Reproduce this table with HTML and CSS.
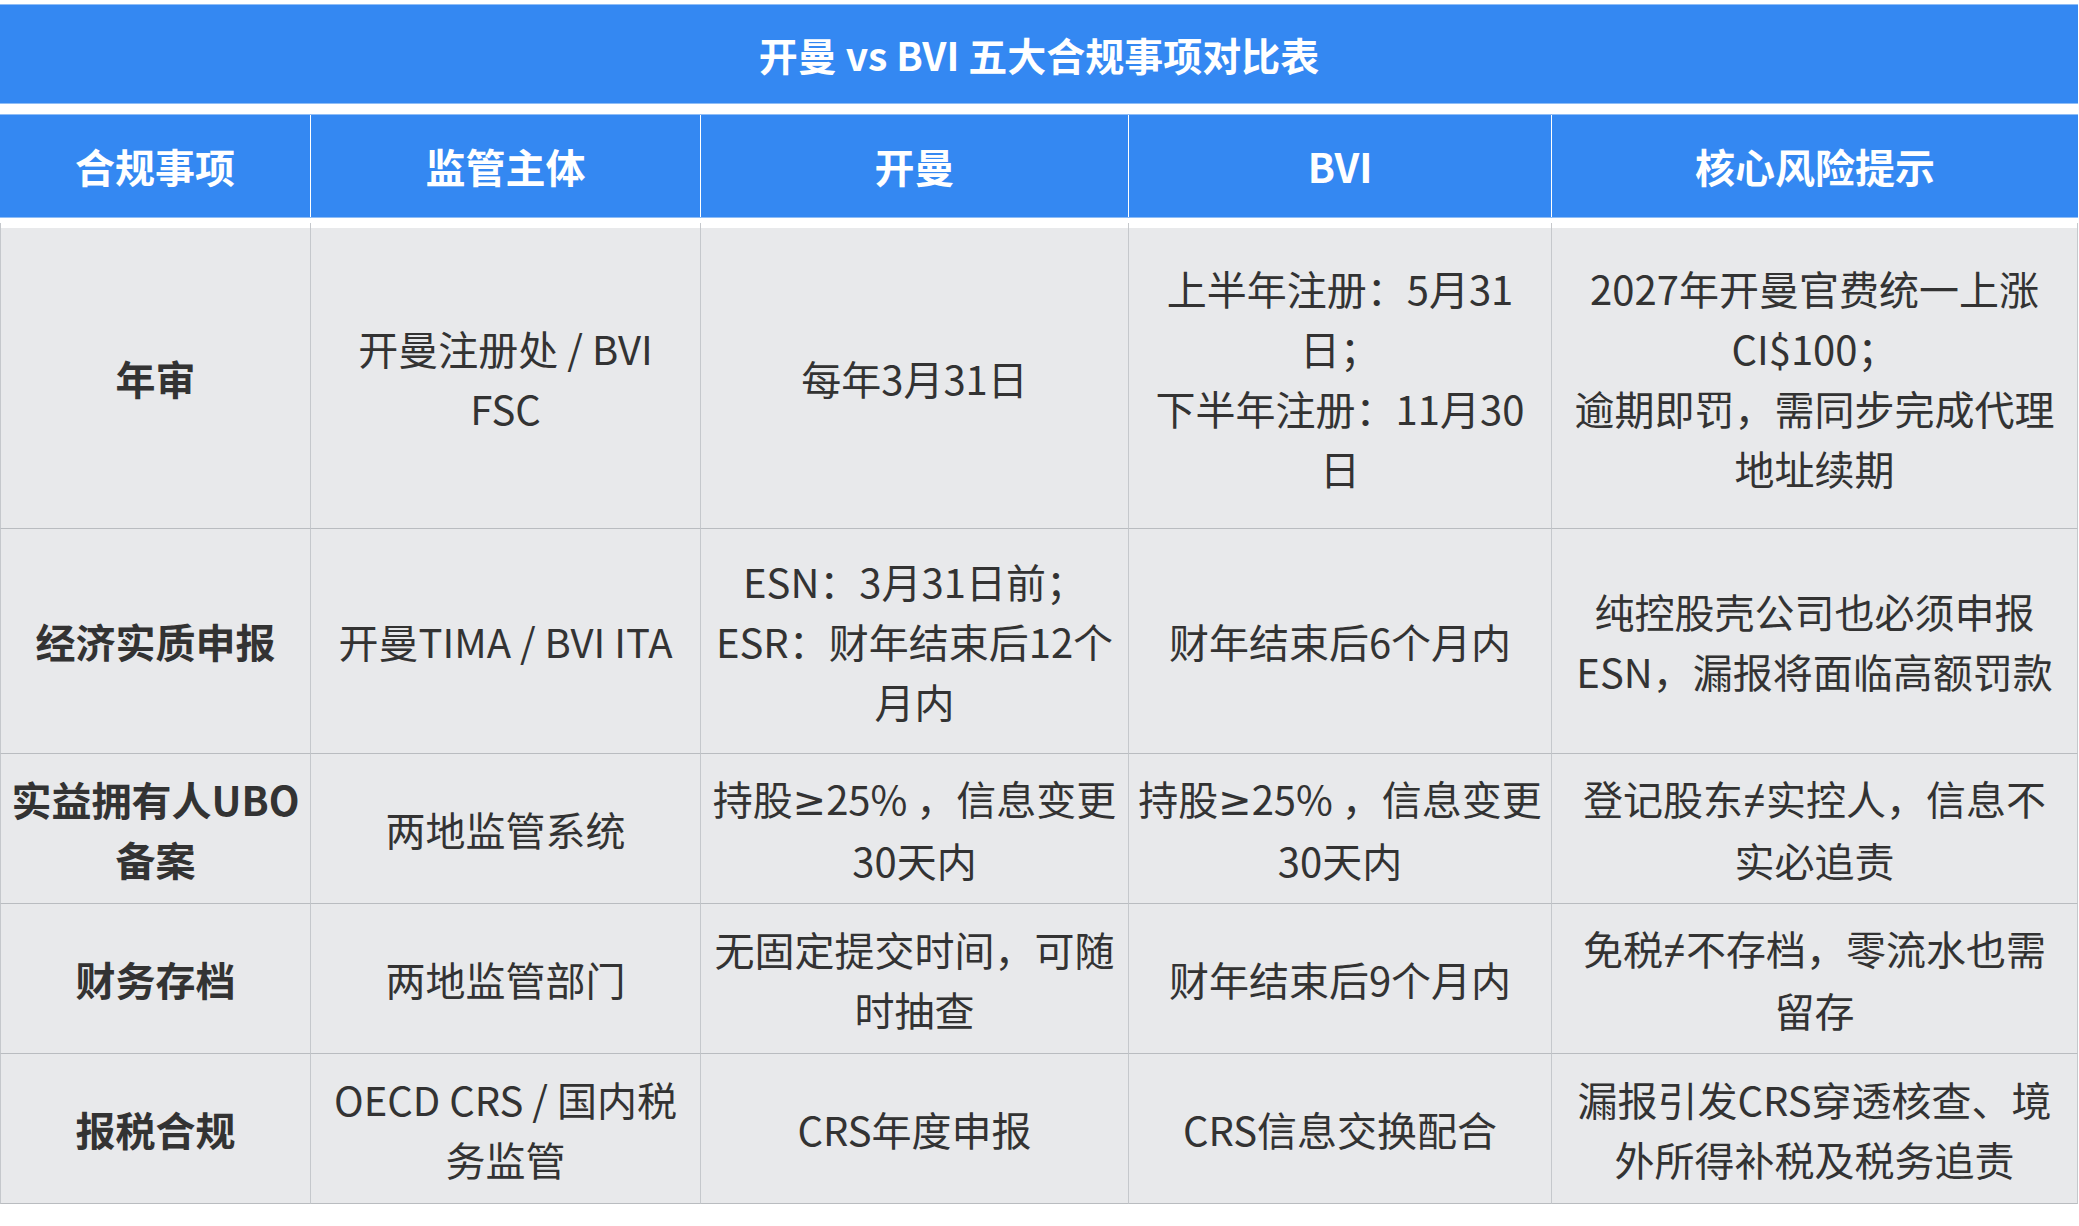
FILE: index.html
```html
<!DOCTYPE html>
<html lang="zh-CN">
<head>
<meta charset="utf-8">
<title>开曼 vs BVI 五大合规事项对比表</title>
<link rel="stylesheet" href="styles.css">
</head>
<body>
<div class="sheet">
  <div class="title">开曼 vs BVI 五大合规事项对比表</div>
  <div class="row head">
    <div class="cell">合规事项</div>
    <div class="cell">监管主体</div>
    <div class="cell">开曼</div>
    <div class="cell">BVI</div>
    <div class="cell">核心风险提示</div>
  </div>
  <div class="row spacer">
    <div class="cell"></div><div class="cell"></div><div class="cell"></div><div class="cell"></div><div class="cell"></div>
  </div>
  <div class="row body r-tall">
    <div class="cell key">年审</div>
    <div class="cell">开曼注册处 / BVI FSC</div>
    <div class="cell">每年3月31日</div>
    <div class="cell"><p>上半年注册：5月31日；</p><p>下半年注册：11月30日</p></div>
    <div class="cell"><p>2027年开曼官费统一上涨CI$100；</p><p>逾期即罚，需同步完成代理地址续期</p></div>
  </div>
  <div class="row body r-mid">
    <div class="cell key">经济实质申报</div>
    <div class="cell">开曼TIMA / BVI ITA</div>
    <div class="cell"><p>ESN：3月31日前；</p><p>ESR：财年结束后12个月内</p></div>
    <div class="cell">财年结束后6个月内</div>
    <div class="cell">纯控股壳公司也必须申报ESN，漏报将面临高额罚款</div>
  </div>
  <div class="row body r-low">
    <div class="cell key"><p class="nowrap">实益拥有人UBO</p><p>备案</p></div>
    <div class="cell">两地监管系统</div>
    <div class="cell"><p class="nowrap">持股<span class="sym">≥</span>25% ，信息变更</p><p>30天内</p></div>
    <div class="cell"><p class="nowrap">持股<span class="sym">≥</span>25% ，信息变更</p><p>30天内</p></div>
    <div class="cell"><p>登记股东<span class="sym">≠</span>实控人，信息不实必追责</p></div>
  </div>
  <div class="row body r-low">
    <div class="cell key">财务存档</div>
    <div class="cell">两地监管部门</div>
    <div class="cell">无固定提交时间，可随时抽查</div>
    <div class="cell">财年结束后9个月内</div>
    <div class="cell"><p>免税<span class="sym">≠</span>不存档，零流水也需留存</p></div>
  </div>
  <div class="row body r-low">
    <div class="cell key">报税合规</div>
    <div class="cell">OECD CRS / 国内税务监管</div>
    <div class="cell">CRS年度申报</div>
    <div class="cell">CRS信息交换配合</div>
    <div class="cell">漏报引发CRS穿透核查、境外所得补税及税务追责</div>
  </div>
</div>
</body>
</html>
```

FILE: styles.css
```css
html, body {
  margin: 0;
  padding: 0;
  background: #ffffff;
}

body {
  font-family: "Noto Sans CJK SC", "Noto Sans", "Liberation Sans", sans-serif;
  color: #333333;
}

.sheet {
  width: 2078px;
  padding-top: 4px;
}

.title {
  height: 98px;
  background: #3488f2;
  border-top: 1px solid #8fbdf6;
  border-bottom: 1px solid #8fbdf6;
  color: #ffffff;
  font-size: 39px;
  font-weight: 700;
  display: flex;
  align-items: center;
  justify-content: center;
  margin-bottom: 10px;
}

.row {
  display: grid;
  grid-template-columns: 311px 390px 428px 423px 526px;
}

.cell {
  display: flex;
  flex-direction: column;
  align-items: center;
  justify-content: center;
  text-align: center;
  padding: 0 14px;
  font-size: 40px;
  line-height: 60px;
  box-sizing: border-box;
  min-width: 0;
  overflow: hidden;
}

.body .cell:nth-child(3) {
  padding: 0 12px;
}

.cell p {
  margin: 0;
}

.nowrap {
  white-space: nowrap;
}

.sym {
  font-family: "Noto Sans", "DejaVu Sans", sans-serif;
}

.head {
  height: 104px;
  background: #3488f2;
  border-top: 1px solid #8fbdf6;
  border-bottom: 1px solid #8fbdf6;
  box-sizing: border-box;
  margin-bottom: 5px;
}

.head .cell {
  color: #ffffff;
  font-weight: 700;
  border-right: 1px solid #ffffff;
}

.head .cell:last-child {
  border-right: none;
}

.spacer {
  height: 5px;
}

.spacer .cell {
  border-right: 1px solid #c5c8cc;
}

.spacer .cell:first-child,
.body .cell:first-child {
  border-left: 1px solid #c5c8cc;
}

.body {
  background: #e8e9eb;
}

.body .cell {
  border-right: 1px solid #c5c8cc;
  border-bottom: 1px solid #b9bcc0;
}

.key {
  font-weight: 700;
}

.r-tall {
  height: 301px;
}

.r-mid {
  height: 225px;
}

.r-low {
  height: 150px;
}
```
